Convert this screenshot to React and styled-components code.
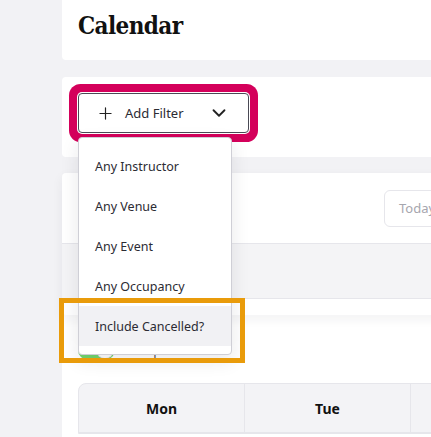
import React from 'react';
import styled, { createGlobalStyle } from 'styled-components';
import { Plus, ChevronDown } from 'lucide-react';

const GlobalStyle = createGlobalStyle`
  html, body {
    margin: 0;
    padding: 0;
    background: #f2f2f5;
    overflow: hidden;
  }
  body {
    font-family: "Noto Sans", "Open Sans", sans-serif;
    color: #2b2b33;
  }
`;

const filters = ['Any Instructor', 'Any Venue', 'Any Event', 'Any Occupancy', 'Include Cancelled?'];
const days = ['Mon', 'Tue', 'Wed', 'Thu', 'Fri', 'Sat', 'Sun'];

const App = () => {
  return (
    <>
      <GlobalStyle />
      <Page>
        <Main>
          <HeaderCard>
            <Title>Calendar</Title>
          </HeaderCard>

          <FilterCard>
            <FilterWrap>
              <FilterButton type="button">
                <Plus size={19} strokeWidth={1.5} />
                <span>Add Filter</span>
                <Chevron><ChevronDown size={22} strokeWidth={2} /></Chevron>
              </FilterButton>
              <Menu>
                {filters.map((f, i) => (
                  <MenuItem key={f} $active={i === filters.length - 1}>
                    {f}
                    {i === filters.length - 1 && <FocusBox />}
                  </MenuItem>
                ))}
              </Menu>
            </FilterWrap>
          </FilterCard>

          <ToolbarCard>
            <ToolbarRow>
              <TodayButton type="button">Today</TodayButton>
            </ToolbarRow>
            <Strip />
            <ToolbarFoot />
          </ToolbarCard>

          <ContentCard>
            <ToggleRow>
              <Switch>
                <Knob />
              </Switch>
              <ToggleLabel>Compact</ToggleLabel>
            </ToggleRow>
            <CalendarGrid>
              {days.map((d) => (
                <DayHead key={d}>{d}</DayHead>
              ))}
            </CalendarGrid>
          </ContentCard>
        </Main>
      </Page>
    </>
  );
};

const Page = styled.div`
  display: flex;
  padding-left: 62px;
  min-height: 437px;
`;

const Main = styled.main`
  width: 400px;
  flex-shrink: 0;
  display: flex;
  flex-direction: column;
`;

const HeaderCard = styled.header`
  height: 60px;
  box-sizing: border-box;
  padding: 11px 16px 0;
  background: #fff;
  border-radius: 0 0 4px 4px;
`;

const Title = styled.h1`
  margin: 0;
  font-family: "DejaVu Serif", serif;
  font-stretch: condensed;
  font-size: 24px;
  font-weight: 700;
  letter-spacing: -0.6px;
  color: #111;
`;

const FilterCard = styled.section`
  margin-top: 17px;
  height: 80px;
  box-sizing: border-box;
  padding: 16px;
  background: #fff;
  border-radius: 4px;
  position: relative;
  z-index: 5;
`;

const FilterWrap = styled.div`
  position: relative;
  width: 171px;
`;

const FilterButton = styled.button`
  display: flex;
  align-items: center;
  width: 171px;
  height: 40px;
  box-sizing: border-box;
  padding: 0 18px 0 17px;
  gap: 10px;
  background: #fff;
  border: 1px solid #4a4a55;
  border-radius: 4px;
  box-shadow: 0 0 0 1px #fff, 0 0 0 9px #d4005b;
  font-family: "Noto Sans", sans-serif;
  font-size: 13px;
  color: #2b2b33;
  cursor: pointer;

  svg {
    color: #222;
  }
`;

const Chevron = styled.span`
  display: flex;
  margin-left: auto;
`;

const Menu = styled.ul`
  position: absolute;
  top: 44px;
  left: 0;
  width: 154px;
  margin: 0;
  padding: 8px 0;
  list-style: none;
  background: #fff;
  border: 1px solid #cfcfd6;
  border-radius: 4px;
  box-sizing: border-box;
  box-shadow: 0 6px 18px rgba(30, 30, 50, 0.1);
`;

const MenuItem = styled.li`
  position: relative;
  height: 40px;
  display: flex;
  align-items: center;
  padding-left: 16px;
  font-size: 12.5px;
  color: #2b2b33;
  background: ${({ $active }) => ($active ? '#f1f1f4' : 'transparent')};
`;

const FocusBox = styled.span`
  position: absolute;
  left: -20px;
  right: -14px;
  top: -8px;
  bottom: -17px;
  border: 5px solid #e99b0a;
  pointer-events: none;
`;

const ToolbarCard = styled.section`
  margin-top: 16px;
  background: #fff;
  border-radius: 4px;
  box-shadow: 0 4px 12px rgba(30, 30, 50, 0.06);
  position: relative;
  z-index: 2;
`;

const ToolbarRow = styled.div`
  height: 70px;
  display: flex;
  align-items: center;
  justify-content: flex-end;
  padding: 0 16px;
`;

const TodayButton = styled.button`
  height: 37px;
  width: 62px;
  background: #fff;
  border: 1px solid #e6e6eb;
  border-radius: 6px;
  font-family: "Noto Sans", sans-serif;
  font-size: 13px;
  color: #a6a6ae;
  text-align: left;
  padding-left: 14px;
`;

const Strip = styled.div`
  height: 54px;
  background: #f4f4f6;
  border-top: 1px solid #e6e6eb;
  border-bottom: 1px solid #e6e6eb;
`;

const ToolbarFoot = styled.div`
  height: 16px;
`;

const ContentCard = styled.section`
  flex: 1;
  background: #fff;
  padding: 25px 16px 0;
  overflow: hidden;
`;

const ToggleRow = styled.div`
  display: flex;
  align-items: center;
  gap: 10px;
  height: 20px;
`;

const Switch = styled.span`
  display: flex;
  align-items: center;
  justify-content: flex-end;
  width: 37px;
  height: 20px;
  box-sizing: border-box;
  padding: 2px;
  border-radius: 10px;
  background: #72d66e;
`;

const Knob = styled.span`
  width: 16px;
  height: 16px;
  border-radius: 50%;
  background: #fff;
  box-shadow: 0 0 0 1px #e0e0e0;
`;

const ToggleLabel = styled.span`
  font-size: 13px;
  color: #555;
`;

const CalendarGrid = styled.div`
  margin-top: 23px;
  display: grid;
  grid-template-columns: repeat(7, 166px);
  border: 1px solid #e6e6eb;
  border-radius: 8px 8px 0 0;
  background: #f3f3f6;
  width: max-content;
`;

const DayHead = styled.div`
  height: 48px;
  display: flex;
  align-items: center;
  justify-content: center;
  font-size: 14px;
  font-weight: 700;
  color: #111;
  border-right: 1px solid #e6e6eb;
  border-bottom: 1px solid #e6e6eb;
`;

export default App;
